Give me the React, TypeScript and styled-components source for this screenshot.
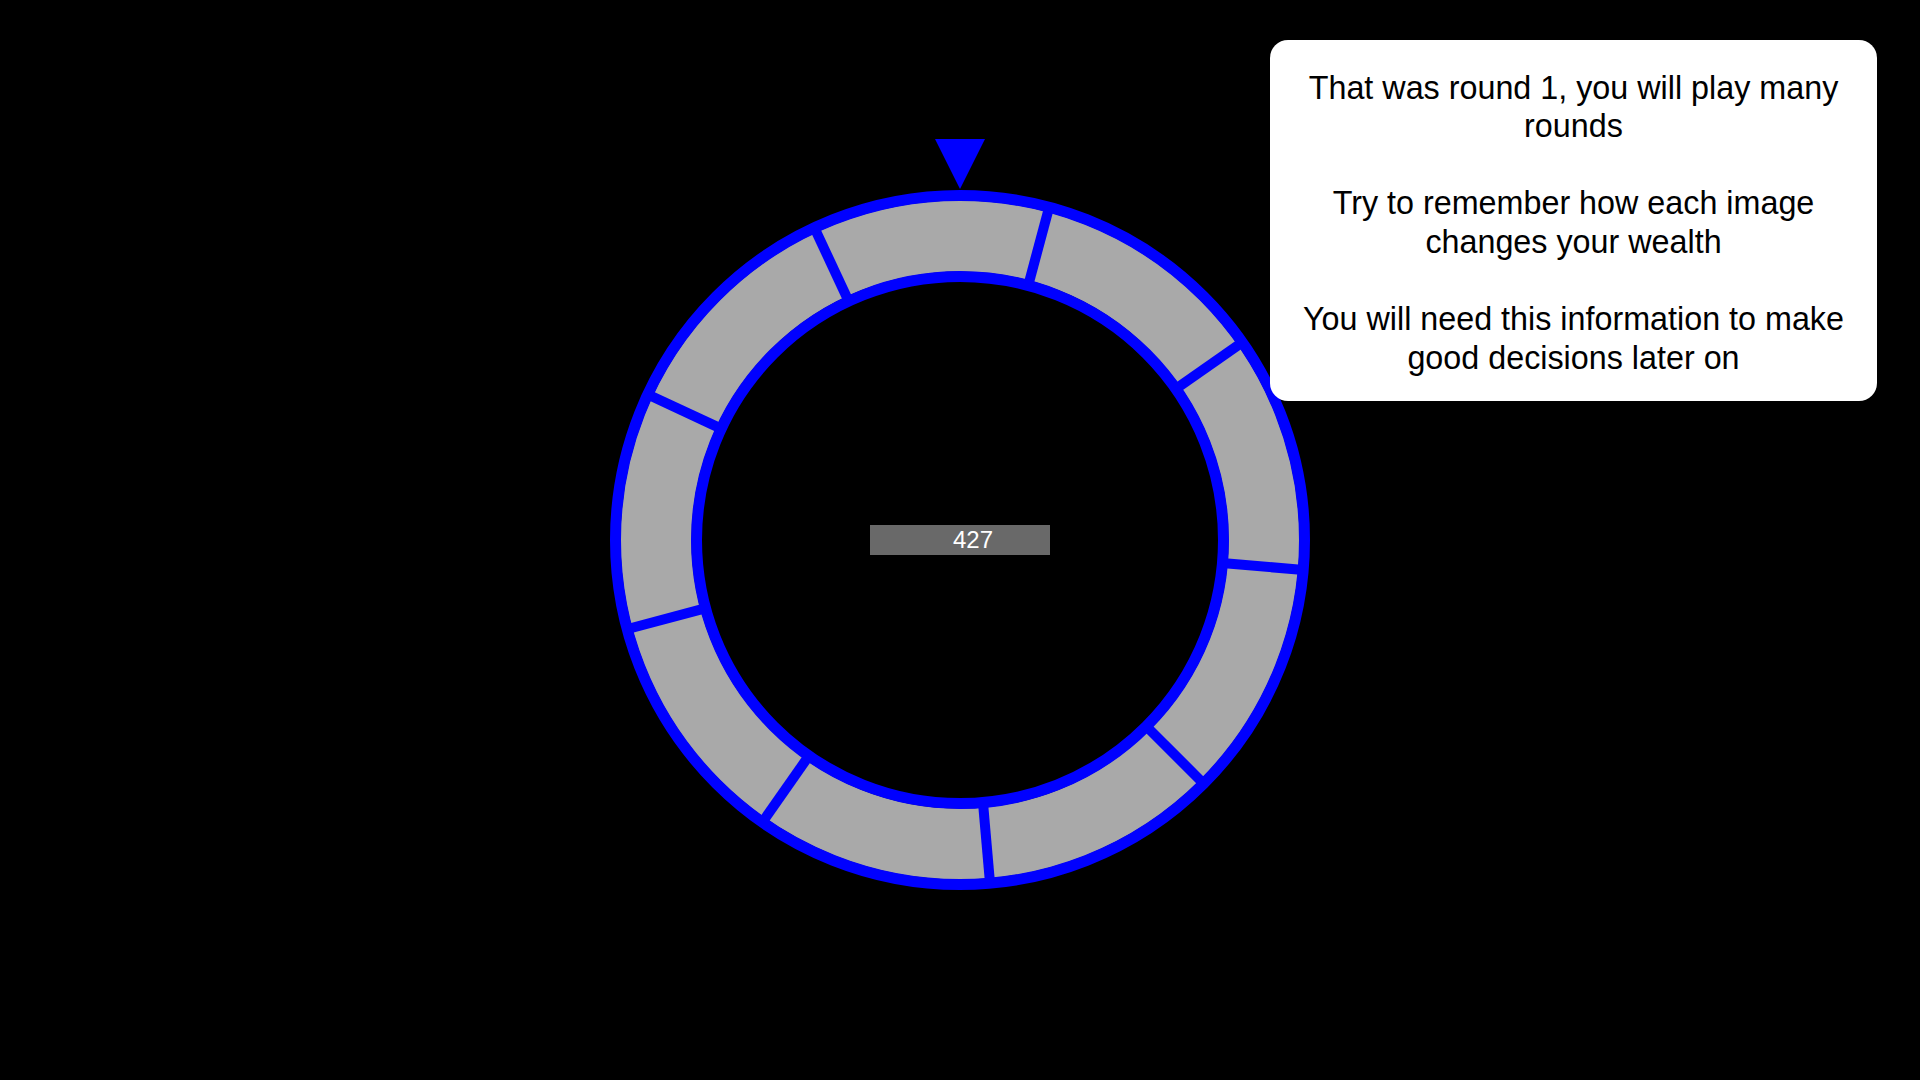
import React from "react";
import styled, { createGlobalStyle } from "styled-components";

const GlobalStyle = createGlobalStyle`
  html, body {
    margin: 0;
    padding: 0;
    background: #000000;
    font-family: "Liberation Sans", Arial, Helvetica, sans-serif;
  }
  #root {
    height: 100vh;
  }
`;

const Page = styled.div`
  position: relative;
  width: 100vw;
  height: 100vh;
  background: #000000;
  display: flex;
  align-items: center;
  justify-content: center;
  overflow: hidden;
`;

const WheelStage = styled.div`
  display: grid;
  place-items: center;
  width: 700px;
  height: 700px;
`;

const WheelSvg = styled.svg`
  grid-area: 1 / 1;
  width: 700px;
  height: 700px;
  overflow: visible;
`;

const WealthLabel = styled.div`
  grid-area: 1 / 1;
  width: 180px;
  height: 30px;
  box-sizing: border-box;
  padding-left: 26px;
  background: #696969;
  color: #ffffff;
  font-family: "Liberation Sans", Arial, Helvetica, sans-serif;
  font-size: 24px;
  line-height: 30px;
  text-align: center;
  position: relative;
  z-index: 1;
`;

const InfoCard = styled.div`
  position: absolute;
  top: 40px;
  right: 43px;
  width: 607px;
  height: 361px;
  box-sizing: border-box;
  padding: 28.5px 20px 0;
  background: #ffffff;
  border-radius: 18px;
  display: flex;
  flex-direction: column;
  gap: 38.6px;
  z-index: 2;
`;

const InfoParagraph = styled.p`
  margin: 0;
  color: #000000;
  font-family: "Liberation Sans", Arial, Helvetica, sans-serif;
  font-size: 32.3px;
  line-height: 38.6px;
  text-align: center;
`;

const BLUE = "#0000ff";
const GRAY = "#a9a9a9";

const SEGMENTS = 9;
const START_ANGLE = 15;

function Wheel() {
  const dividers = Array.from({ length: SEGMENTS }, (_, i) => {
    const deg = START_ANGLE + (360 / SEGMENTS) * i;
    const rad = (deg * Math.PI) / 180;
    const sx = Math.sin(rad);
    const cy = -Math.cos(rad);
    return (
      <line
        key={i}
        x1={263 * sx}
        y1={263 * cy}
        x2={345 * sx}
        y2={345 * cy}
        stroke={BLUE}
        strokeWidth={10}
      />
    );
  });

  return (
    <WheelSvg viewBox="-350 -350 700 700" xmlns="http://www.w3.org/2000/svg">
      <circle cx={0} cy={0} r={304} fill="none" stroke={GRAY} strokeWidth={71} />
      {dividers}
      <circle cx={0} cy={0} r={344.5} fill="none" stroke={BLUE} strokeWidth={11} />
      <circle cx={0} cy={0} r={263.5} fill="none" stroke={BLUE} strokeWidth={11} />
      <polygon points="-25,-401 25,-401 0,-351" fill={BLUE} />
    </WheelSvg>
  );
}

export default function App() {
  return (
    <>
      <GlobalStyle />
      <Page>
        <WheelStage>
          <Wheel />
          <WealthLabel>427</WealthLabel>
        </WheelStage>
        <InfoCard>
          <InfoParagraph>That was round 1, you will play many rounds</InfoParagraph>
          <InfoParagraph>Try to remember how each image changes your wealth</InfoParagraph>
          <InfoParagraph>You will need this information to make good decisions later on</InfoParagraph>
        </InfoCard>
      </Page>
    </>
  );
}
